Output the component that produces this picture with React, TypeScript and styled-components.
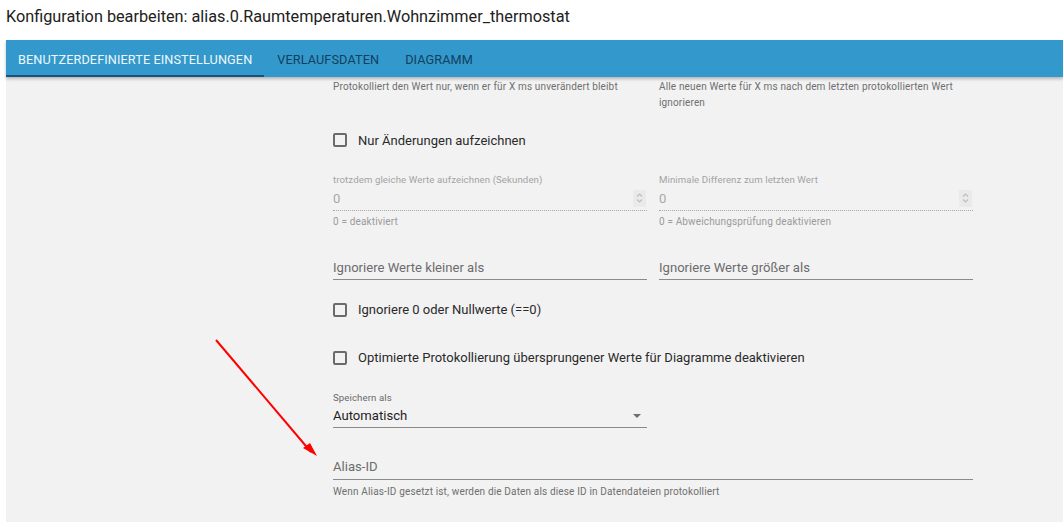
import React from "react";
import styled, { createGlobalStyle } from "styled-components";

const Global = createGlobalStyle`
  html, body { margin: 0; padding: 0; background: #ffffff; }
  body { font-family: Roboto, "Noto Sans", "Liberation Sans", sans-serif; overflow: hidden; }
  * { box-sizing: border-box; }
`;

const Page = styled.div`
  position: relative;
  width: 1063px;
  height: 522px;
  overflow: hidden;
`;

const Title = styled.h2`
  margin: 0;
  padding: 6px 0 0 6px;
  height: 40px;
  font-size: 16.25px;
  font-weight: 400;
  line-height: 22px;
  color: #212121;
`;

const Dialog = styled.div`
  margin-left: 6px;
  background: #f2f2f2;
  height: 482px;
`;

const TabBar = styled.div`
  display: flex;
  height: 37px;
  background: #3399cc;
  box-shadow: 0 2px 3px rgba(0, 0, 0, 0.25);
  position: relative;
  z-index: 1;
`;

const Tab = styled.div<{ $active?: boolean }>`
  display: flex;
  align-items: center;
  padding: 3px ${(p) => (p.$active ? "12px" : "13px")} 0;
  font-size: 12.7px;
  letter-spacing: 0.1px;
  text-transform: uppercase;
  color: ${(p) => (p.$active ? "#eef7fc" : "#123f60")};
  border-bottom: 2px solid ${(p) => (p.$active ? "#1b4f80" : "transparent")};
`;

const Content = styled.div`
  padding: 2px 0 0 327px;
  display: flex;
  flex-direction: column;
  width: 967px;
`;

const Row = styled.div<{ $mt?: number }>`
  display: grid;
  grid-template-columns: 314px 314px;
  column-gap: 12px;
  margin-top: ${(p) => p.$mt ?? 0}px;
`;

const Full = styled.div<{ $mt?: number; $w?: number }>`
  width: ${(p) => p.$w ?? 640}px;
  margin-top: ${(p) => p.$mt ?? 0}px;
`;

const Helper = styled.div<{ $light?: boolean; $mt?: number }>`
  font-size: 10px;
  line-height: 15.5px;
  margin-top: ${(p) => p.$mt ?? 0}px;
  color: ${(p) => (p.$light ? "#9a9a9a" : "#6f6f6f")};
  letter-spacing: 0.15px;
`;

const CheckRow = styled.label`
  display: flex;
  align-items: center;
  height: 24px;
  gap: 11px;
  font-size: 13px;
  color: #2a2a2a;
`;

const Box = styled.span`
  width: 14px;
  height: 14px;
  border: 2px solid #6b6b6b;
  border-radius: 2px;
  flex: none;
`;

const SmallLabel = styled.div<{ $dim?: boolean }>`
  font-size: 9.65px;
  line-height: 12px;
  color: ${(p) => (p.$dim ? "#a3a3a3" : "#6a6a6a")};
  letter-spacing: 0.1px;
`;

const NumberField = styled.div`
  display: flex;
  align-items: center;
  justify-content: space-between;
  height: 23px;
  margin-top: 2px;
  padding-bottom: 2px;
  border-bottom: 1px dotted #a8a8a8;
  font-size: 13px;
  color: #a8a8a8;
`;

const Spinner = styled.span`
  width: 13px;
  height: 17px;
  background: #eaeaea;
  display: flex;
  align-items: center;
  justify-content: center;
  margin-right: 1px;
`;

const TextField = styled.div<{ $dark?: boolean; $h?: number }>`
  display: flex;
  align-items: center;
  justify-content: space-between;
  height: ${(p) => p.$h ?? 23}px;
  border-bottom: 1px solid #8a8a8a;
  font-size: 13.1px;
  color: ${(p) => (p.$dark ? "#1e1e1e" : "#6c6c6c")};
`;

const Arrow = styled.span`
  width: 0;
  height: 0;
  border-left: 4.5px solid transparent;
  border-right: 4.5px solid transparent;
  border-top: 4.5px solid #6e6e6e;
  margin-right: 6px;
  margin-top: 2px;
`;

const Annotation = styled.svg`
  position: absolute;
  left: 0;
  top: 0;
  pointer-events: none;
`;

const SpinIcon = () => (
  <svg width="7" height="12" viewBox="0 0 7 12" fill="none" stroke="#bdbdbd" strokeWidth="1.2">
    <path d="M1 4.5 L3.5 2 L6 4.5" />
    <path d="M1 7.5 L3.5 10 L6 7.5" />
  </svg>
);

const Check = ({ children, mt }: { children: React.ReactNode; mt: number }) => (
  <Full $mt={mt}>
    <CheckRow>
      <Box />
      {children}
    </CheckRow>
  </Full>
);

export default function App() {
  return (
    <Page>
      <Global />
      <Title>Konfiguration bearbeiten: alias.0.Raumtemperaturen.Wohnzimmer_thermostat</Title>
      <Dialog>
        <TabBar>
          <Tab $active>Benutzerdefinierte Einstellungen</Tab>
          <Tab>Verlaufsdaten</Tab>
          <Tab>Diagramm</Tab>
        </TabBar>
        <Content>
          <Row>
            <Helper>Protokolliert den Wert nur, wenn er für X ms unverändert bleibt</Helper>
            <Helper>Alle neuen Werte für X ms nach dem letzten protokollierten Wert ignorieren</Helper>
          </Row>
          <Check mt={18}>Nur Änderungen aufzeichnen</Check>
          <Row $mt={22}>
            <div>
              <SmallLabel $dim>trotzdem gleiche Werte aufzeichnen (Sekunden)</SmallLabel>
              <NumberField>
                0
                <Spinner>
                  <SpinIcon />
                </Spinner>
              </NumberField>
              <Helper $light $mt={3}>0 = deaktiviert</Helper>
            </div>
            <div>
              <SmallLabel $dim>Minimale Differenz zum letzten Wert</SmallLabel>
              <NumberField>
                0
                <Spinner>
                  <SpinIcon />
                </Spinner>
              </NumberField>
              <Helper $light $mt={3}>0 = Abweichungsprüfung deaktivieren</Helper>
            </div>
          </Row>
          <Row $mt={27}>
            <TextField>Ignoriere Werte kleiner als</TextField>
            <TextField>Ignoriere Werte größer als</TextField>
          </Row>
          <Check mt={18}>Ignoriere 0 oder Nullwerte (==0)</Check>
          <Check mt={24}>Optimierte Protokollierung übersprungener Werte für Diagramme deaktivieren</Check>
          <Full $mt={22} $w={314}>
            <SmallLabel>Speichern als</SmallLabel>
            <TextField $dark $h={24}>
              Automatisch
              <Arrow />
            </TextField>
          </Full>
          <Full $mt={27}>
            <TextField $h={25}>Alias-ID</TextField>
            <Helper $mt={4}>Wenn Alias-ID gesetzt ist, werden die Daten als diese ID in Datendateien protokolliert</Helper>
          </Full>
        </Content>
      </Dialog>
      <Annotation width="1063" height="522" viewBox="0 0 1063 522">
        <line x1="216" y1="340" x2="311" y2="452" stroke="#ff0000" strokeWidth="2" />
        <polygon points="317,456 303,448 310,443" fill="#ff0000" />
      </Annotation>
    </Page>
  );
}
